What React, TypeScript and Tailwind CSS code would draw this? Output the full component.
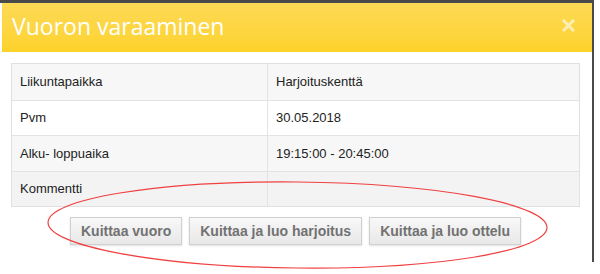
import React from "react";

const rows: [string, string][] = [
  ["Liikuntapaikka", "Harjoituskenttä"],
  ["Pvm", "30.05.2018"],
  ["Alku- loppuaika", "19:15:00 - 20:45:00"],
  ["Kommentti", ""],
];

const rowBg = ["bg-[#f7f7f7]", "bg-white", "bg-[#f7f7f7]", "bg-[#f3f3f3]"];

export default function App() {
  return (
    <div className="w-[600px] h-[274px] bg-white relative overflow-hidden">
      <div className="w-[594px] h-[262px] border-t-[3px] border-r-[2px] border-[#4a4a4a] bg-white flex flex-col">
        <div className="h-[49px] ml-[2px] flex items-center justify-between pl-[10px] pr-[17px] bg-gradient-to-b from-[#fdda55] to-[#fdd22a]">
          <span className="text-white text-[23px] leading-none pb-[3px]" style={{ fontFamily: '"Open Sans", sans-serif' }}>
            Vuoron varaaminen
          </span>
          <svg width="13" height="13" viewBox="0 0 13 13" className="opacity-60 mb-[4px]">
            <path d="M2 2 L11 11 M11 2 L2 11" stroke="white" strokeWidth="3" strokeLinecap="square" />
          </svg>
        </div>
        <div className="pt-[11px] pl-[11px] pr-[12px]" style={{ fontFamily: '"Liberation Sans", Arial, sans-serif' }}>
          <div className="border border-[#e0e0e0]">
            {rows.map(([a, b], i) => (
              <div
                key={a}
                className={`flex h-[35.5px] text-[13px] text-[#222] ${rowBg[i]} ${i > 0 ? "border-t border-[#e3e3e3]" : ""}`}
              >
                <div className="w-[256px] border-r border-[#e3e3e3] flex items-center pl-[8px]">{a}</div>
                <div className="flex-1 flex items-center pl-[8px]">{b}</div>
              </div>
            ))}
          </div>
          <div className="flex justify-center gap-[7px] mt-[10px]">
            {["Kuittaa vuoro", "Kuittaa ja luo harjoitus", "Kuittaa ja luo ottelu"].map((t) => (
              <button
                key={t}
                className="h-[28px] px-[10px] text-[14px] font-bold text-[#727272] border border-[#d0d0d0] bg-gradient-to-b from-[#f8f8f8] to-[#e8e8e8] shadow-[0_1px_2px_rgba(0,0,0,0.12)]"
              >
                {t}
              </button>
            ))}
          </div>
        </div>
      </div>
      <svg className="absolute left-0 top-0 pointer-events-none" width="600" height="274">
        <ellipse cx="297.5" cy="225" rx="249.5" ry="43" fill="none" stroke="#f04040" strokeWidth="1.2" transform="rotate(0.6 297.5 225)" />
      </svg>
    </div>
  );
}
